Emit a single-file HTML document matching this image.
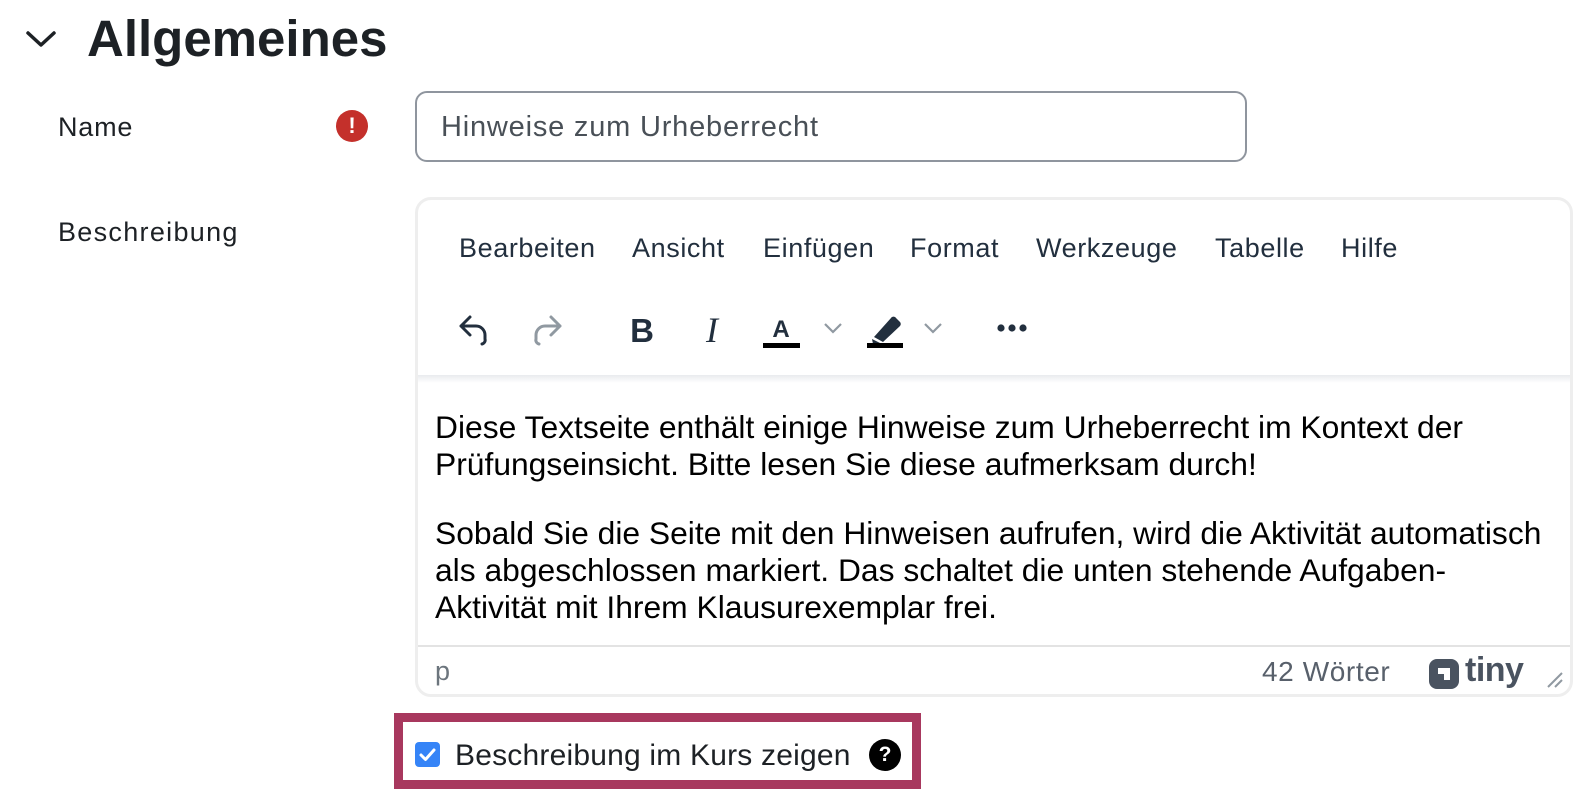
<!DOCTYPE html>
<html><head><meta charset="utf-8"><style>
*{margin:0;padding:0;box-sizing:border-box}
body{width:1596px;height:804px;background:#fff;font-family:"Liberation Sans",sans-serif;color:#1d2125;position:relative;overflow:hidden}
.a{position:absolute;white-space:nowrap}
.menu{position:absolute;top:233px;font-size:27px;letter-spacing:0.6px;color:#222f3e}
</style></head><body>
<svg class="a" style="left:24px;top:28px" width="34" height="22" viewBox="0 0 34 22"><path d="M4 5 L17 17 L30 5" fill="none" stroke="#1d2125" stroke-width="3.5" stroke-linecap="round" stroke-linejoin="round"/></svg>
<div class="a" style="left:87px;top:9px;font-size:51px;font-weight:bold;color:#1d2125">Allgemeines</div>
<div class="a" style="left:58px;top:112px;font-size:27px;letter-spacing:0.8px">Name</div>
<div class="a" style="left:336px;top:110px;width:32px;height:32px;border-radius:50%;background:#c4302b;color:#fff;font-weight:bold;font-size:22px;text-align:center;line-height:32px">!</div>
<div class="a" style="left:58px;top:217px;font-size:27px;letter-spacing:1.3px">Beschreibung</div>
<div class="a" style="left:415px;top:91px;width:832px;height:71px;border:2px solid #8f959e;border-radius:12px;"></div>
<div class="a" style="left:441px;top:111px;font-size:29px;letter-spacing:0.8px;color:#495057">Hinweise zum Urheberrecht</div>
<div class="a" style="left:415px;top:197px;width:1158px;height:500px;border:3px solid #eeeeee;border-radius:16px;"></div>
<div class="a" style="left:418px;top:375px;width:1152px;height:8px;background:linear-gradient(#e9ebee,#fff)"></div>
<div class="menu" style="left:459px">Bearbeiten</div>
<div class="menu" style="left:632px">Ansicht</div>
<div class="menu" style="left:763px">Einfügen</div>
<div class="menu" style="left:910px">Format</div>
<div class="menu" style="left:1036px">Werkzeuge</div>
<div class="menu" style="left:1215px">Tabelle</div>
<div class="menu" style="left:1341px">Hilfe</div>
<svg class="a" style="left:455px;top:312px" width="640" height="48" viewBox="0 0 640 48">
<path d="M15 5 L6 14 L15 23 M6 14 H21 A9 9 0 0 1 30 23 V27 A4 4 0 0 1 27 32" fill="none" stroke="#222f3e" stroke-width="3" stroke-linecap="round" stroke-linejoin="round"/>
<path d="M96 5 L105 14 L96 23 M105 14 H90 A9 9 0 0 0 81 23 V27 A4 4 0 0 0 84 32" fill="none" stroke="#9099a1" stroke-width="3" stroke-linecap="round" stroke-linejoin="round"/>
<text x="187" y="30" font-family="Liberation Sans" font-weight="bold" font-size="33" fill="#222f3e" text-anchor="middle">B</text>
<text x="257" y="30" font-family="Liberation Serif" font-style="italic" font-size="36" fill="#222f3e" text-anchor="middle">I</text>
<text x="326" y="25" font-family="Liberation Sans" font-weight="bold" font-size="24" fill="#222f3e" text-anchor="middle">A</text>
<rect x="308" y="31" width="37" height="5" fill="#000"/>
<path d="M370 12 L378 20 L386 12" fill="none" stroke="#9099a1" stroke-width="2.2"/>
<path d="M419 25 L436 6 A3 3 0 0 1 441 6 L445 10 A3 3 0 0 1 445 14 L428 30 Z M417 27 L425 31 L418 32 Z" fill="#222f3e"/>
<rect x="412" y="31" width="36" height="5" fill="#000"/>
<path d="M470 12 L478 20 L486 12" fill="none" stroke="#9099a1" stroke-width="2.2"/>
<circle cx="546" cy="16" r="3.6" fill="#222f3e"/><circle cx="557" cy="16" r="3.6" fill="#222f3e"/><circle cx="568" cy="16" r="3.6" fill="#222f3e"/>
</svg>
<div class="a" style="left:435px;top:409px;font-size:31.8px;line-height:37px;color:#000">Diese Textseite enthält einige Hinweise zum Urheberrecht im Kontext der<br>Prüfungseinsicht. Bitte lesen Sie diese aufmerksam durch!</div>
<div class="a" style="left:435px;top:515px;font-size:31.8px;line-height:37px;color:#000">Sobald Sie die Seite mit den Hinweisen aufrufen, wird die Aktivität automatisch<br>als abgeschlossen markiert. Das schaltet die unten stehende Aufgaben-<br>Aktivität mit Ihrem Klausurexemplar frei.</div>
<div class="a" style="left:418px;top:645px;width:1152px;height:2px;background:#e3e3e3"></div>
<div class="a" style="left:435px;top:656px;font-size:27px;color:#6c757d">p</div>
<div class="a" style="left:1262px;top:656px;font-size:28px;letter-spacing:0.6px;color:#58606b">42 Wörter</div>
<svg class="a" style="left:1427px;top:657px" width="34" height="34" viewBox="0 0 34 34"><rect x="2" y="2" width="30" height="30" rx="8" fill="#4a5360"/><path d="M11 11 H23 V23 H17 V17 H11 Z" fill="#fff"/></svg>
<div class="a" style="left:1465px;top:651px;font-size:34px;font-weight:bold;color:#4a5360;letter-spacing:-0.5px">tiny</div>
<svg class="a" style="left:1545px;top:670px" width="20" height="20" viewBox="0 0 20 20"><path d="M3 17 L17 3 M10 17 L17 10" stroke="#9099a1" stroke-width="2"/></svg>
<div class="a" style="left:394px;top:713px;width:527px;height:76px;border:9px solid #a8385e"></div>
<div class="a" style="left:415px;top:742px;width:25px;height:25px;background:#3584f7;border-radius:4px"></div>
<svg class="a" style="left:415px;top:742px" width="25" height="25" viewBox="0 0 25 25"><path d="M6 13 L10.5 17.5 L19 8" fill="none" stroke="#fff" stroke-width="3" stroke-linecap="round" stroke-linejoin="round"/></svg>
<div class="a" style="left:455px;top:739px;font-size:30px;letter-spacing:0.2px;color:#1d2125">Beschreibung im Kurs zeigen</div>
<div class="a" style="left:869px;top:739px;width:32px;height:32px;border-radius:50%;background:#000;color:#fff;font-weight:bold;font-size:21px;text-align:center;line-height:32px">?</div>
</body></html>
